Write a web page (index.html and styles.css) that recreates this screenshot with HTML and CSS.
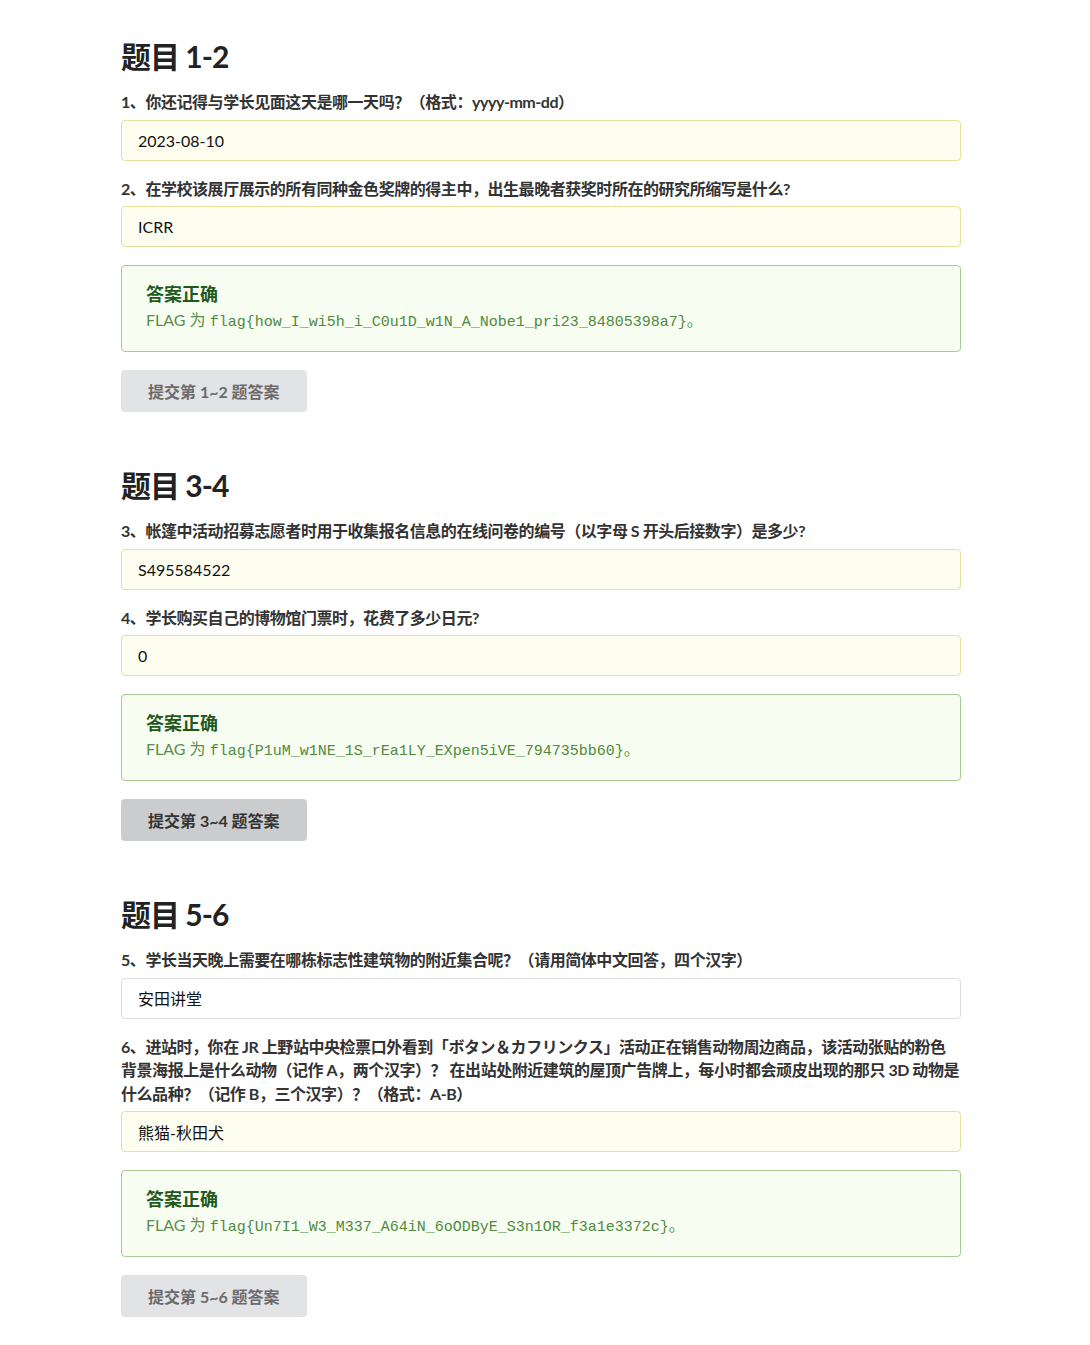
FILE: index.html
```html
<!DOCTYPE html>
<html lang="zh-CN">
<head>
<meta charset="utf-8">
<title>题目</title>
<link rel="stylesheet" href="styles.css">
</head>
<body>
<main class="page">
  <section class="section">
    <h2 class="title">题目 1-2</h2>
    <label class="q">1、你还记得与学长见面这天是哪一天吗？（格式：yyyy-mm-dd）</label>
    <input class="field" type="text" value="2023-08-10">
    <label class="q">2、在学校该展厅展示的所有同种金色奖牌的得主中，出生最晚者获奖时所在的研究所缩写是什么?</label>
    <input class="field" type="text" value="ICRR">
    <div class="answer">
      <div class="answer-title">答案正确</div>
      <div class="answer-text">FLAG 为 <code class="flag">flag{how_I_wi5h_i_C0u1D_w1N_A_Nobe1_pri23_84805398a7}</code>。</div>
    </div>
    <button class="submit" type="button">提交第 1~2 题答案</button>
  </section>

  <section class="section">
    <h2 class="title">题目 3-4</h2>
    <label class="q">3、帐篷中活动招募志愿者时用于收集报名信息的在线问卷的编号（以字母 S 开头后接数字）是多少?</label>
    <input class="field" type="text" value="S495584522">
    <label class="q">4、学长购买自己的博物馆门票时，花费了多少日元?</label>
    <input class="field" type="text" value="0">
    <div class="answer">
      <div class="answer-title">答案正确</div>
      <div class="answer-text">FLAG 为 <code class="flag">flag{P1uM_w1NE_1S_rEa1LY_EXpen5iVE_794735bb60}</code>。</div>
    </div>
    <button class="submit submit-active" type="button">提交第 3~4 题答案</button>
  </section>

  <section class="section">
    <h2 class="title">题目 5-6</h2>
    <label class="q">5、学长当天晚上需要在哪栋标志性建筑物的附近集合呢？（请用简体中文回答，四个汉字）</label>
    <input class="field field-plain" type="text" value="安田讲堂">
    <label class="q">6、进站时，你在 JR 上野站中央检票口外看到「ボタン＆カフリンクス」活动正在销售动物周边商品，该活动张贴的粉色背景海报上是什么动物（记作 A，两个汉字）？ 在出站处附近建筑的屋顶广告牌上，每小时都会顽皮出现的那只 3D 动物是什么品种？（记作 B，三个汉字）？（格式：A-B）</label>
    <input class="field" type="text" value="熊猫-秋田犬">
    <div class="answer">
      <div class="answer-title">答案正确</div>
      <div class="answer-text">FLAG 为 <code class="flag">flag{Un7I1_W3_M337_A64iN_6oODByE_S3n1OR_f3a1e3372c}</code>。</div>
    </div>
    <button class="submit" type="button">提交第 5~6 题答案</button>
  </section>
</main>
</body>
</html>
```

FILE: styles.css
```css
* {
  box-sizing: border-box;
}

html, body {
  margin: 0;
  padding: 0;
  background: #ffffff;
}

body {
  font-family: Lato, "Noto Sans CJK SC", "Noto Sans", sans-serif;
  font-size: 16px;
  color: #333333;
}

.page {
  width: 840px;
  margin-left: 121px;
  padding-top: 38px;
  padding-bottom: 28px;
  display: flex;
  flex-direction: column;
  gap: 55px;
}

.section {
  display: flex;
  flex-direction: column;
}

.title {
  margin: 0 0 16px 0;
  font-size: 30px;
  line-height: 36px;
  font-weight: 700;
  color: #222222;
  letter-spacing: -1px;
}

.q {
  display: block;
  font-weight: 700;
  font-size: 16px;
  line-height: 23.5px;
  color: #333333;
  letter-spacing: -0.45px;
  margin-bottom: 6px;
}

.field {
  display: block;
  width: 100%;
  height: 41px;
  margin: 0 0 16px 0;
  padding: 0 16px;
  font-family: Lato, "Noto Sans CJK SC", sans-serif;
  font-size: 16px;
  color: #111111;
  background: #fefef0;
  border: 1px solid #e6df9e;
  border-radius: 4px;
  outline: none;
}

.field-plain {
  background: #ffffff;
  border-color: #dddddd;
}

.answer {
  margin-top: 2px;
  padding: 15px 24px 16px 24px;
  background: #f8fdf2;
  border: 1px solid #a6cb93;
  border-radius: 4px;
}

.answer-title {
  font-size: 18px;
  line-height: 27px;
  font-weight: 700;
  color: #1f5a1c;
}

.answer-text {
  font-size: 16px;
  line-height: 24px;
  color: #5b8f4c;
}

.flag {
  font-family: "Liberation Mono", "DejaVu Sans Mono", monospace;
  font-size: 15px;
  color: #4f8a40;
}

.submit {
  align-self: flex-start;
  margin-top: 18px;
  height: 42px;
  padding: 0 27px;
  font-family: Lato, "Noto Sans CJK SC", sans-serif;
  font-size: 16px;
  font-weight: 700;
  color: #6a6a6a;
  background: #e2e3e5;
  border: none;
  border-radius: 4px;
}

.submit-active {
  background: #cbccce;
  color: #333333;
}
```
